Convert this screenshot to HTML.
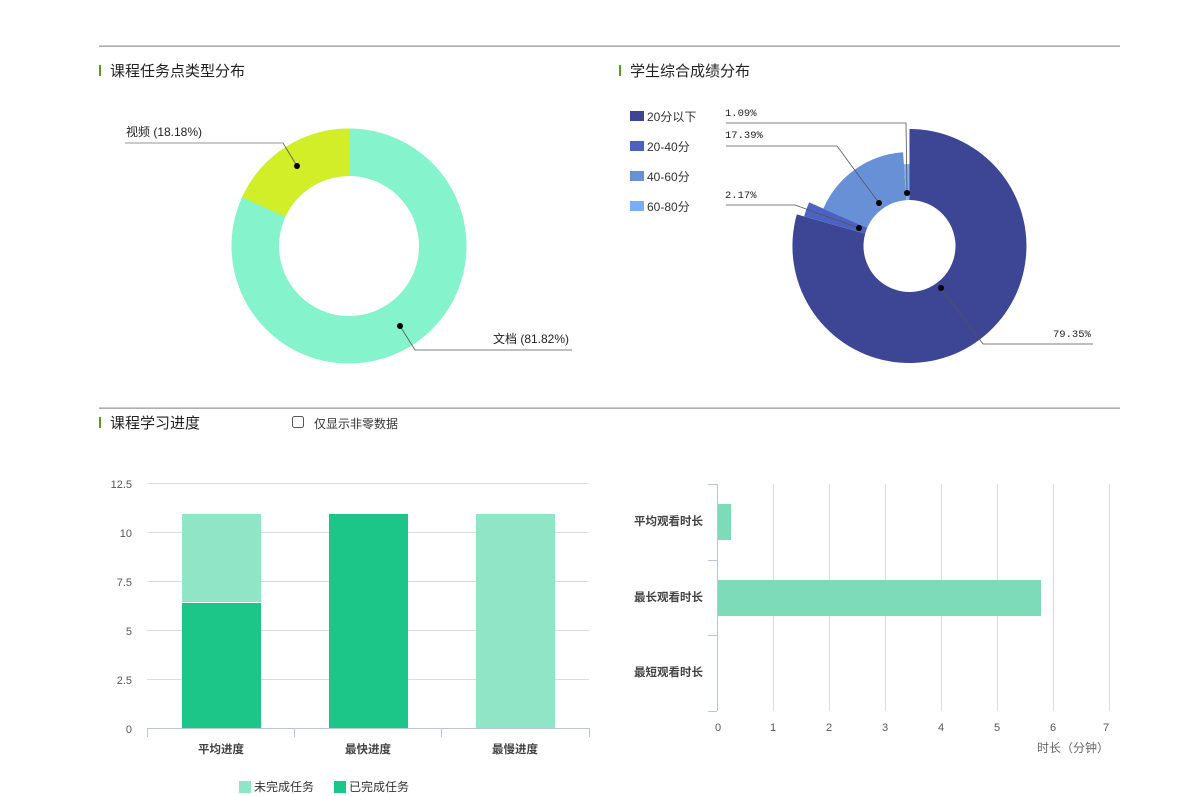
<!DOCTYPE html>
<html><head><meta charset="utf-8"><style>
html,body{margin:0;padding:0;background:#fff;width:1178px;height:796px;overflow:hidden}
svg{position:absolute;left:0;top:0}
text{font-family:"Liberation Sans","Noto Sans CJK SC",sans-serif}
text.mono{font-family:"Liberation Mono",monospace}
</style></head><body>
<svg width="1178" height="796" viewBox="0 0 1178 796" xmlns="http://www.w3.org/2000/svg">
<rect x="99" y="45.5" width="1021" height="1.3" fill="#9a9a9a"/>
<rect x="99" y="407.5" width="1021" height="1.3" fill="#9a9a9a"/>
<rect x="99" y="65" width="2" height="11" fill="#5a9a1e"/>
<rect x="619" y="65" width="2" height="11" fill="#5a9a1e"/>
<rect x="99" y="417" width="2" height="11" fill="#5a9a1e"/>
<text x="110" y="76" font-size="15" fill="#222">课程任务点类型分布</text>
<text x="630" y="76" font-size="15" fill="#222">学生综合成绩分布</text>
<text x="110" y="428" font-size="15" fill="#222">课程学习进度</text>
<rect x="292.5" y="416.5" width="11" height="11" rx="2" fill="#fff" stroke="#555" stroke-width="1"/>
<text x="314" y="428" font-size="12" fill="#333">仅显示非零数据</text>

<circle cx="349" cy="246" r="93.75" fill="none" stroke="#85f3cc" stroke-width="47.5"/>
<path d="M349 128.5 L349 176 A70 70 0 0 0 285.3 216.9 L242.1 197.2 A117.5 117.5 0 0 1 349 128.5 Z" fill="#d2ee28"/>
<polyline points="297,166 283,143 125,143" fill="none" stroke="#555" stroke-width="0.8"/>
<polyline points="125,143 283,143" fill="none" stroke="#aaa" stroke-width="1.2"/>
<circle cx="297" cy="166" r="3" fill="#000"/>
<polyline points="400,326 415,350 572,350" fill="none" stroke="#555" stroke-width="0.8"/>
<circle cx="400" cy="326" r="3" fill="#000"/>
<text x="126" y="136" font-size="12" fill="#222">视频 (18.18%)</text>
<text x="493" y="343" font-size="12" fill="#222">文档 (81.82%)</text>

<path d="M909.5 129 A117 117 0 1 1 796.8 214.4 L865.2 233.6 A46 46 0 1 0 909.5 200 Z" fill="#3d4595"/>
<path d="M804.1 216.4 A109.5 109.5 0 0 1 809.1 202.4 L867.3 227.7 A46 46 0 0 0 865.2 233.6 Z" fill="#4c62c2"/>
<path d="M823.3 208.6 A94 94 0 0 1 903.1 152.2 L906.3 200.1 A46 46 0 0 0 867.3 227.7 Z" fill="#6890d6"/>
<path d="M903.9 164.2 A82 82 0 0 1 909.5 164 L909.5 200 L906.3 200.1 Z" fill="#78aef8"/>
<g fill="none" stroke="#555" stroke-width="0.8">
<polyline points="907,193 906,123 726,123"/>
<polyline points="879,203 837,146 726,146"/>
<polyline points="859,228 795,205 726,205"/>
<polyline points="941,288 983,344 1093,344"/>
</g>
<circle cx="907" cy="193" r="3" fill="#000"/>
<circle cx="879" cy="203" r="3" fill="#000"/>
<circle cx="859" cy="228" r="3" fill="#000"/>
<circle cx="941" cy="288" r="3" fill="#000"/>
<text class="mono" x="725" y="116" font-size="10.5" fill="#222" style="font-family:'Liberation Mono',monospace">1.09%</text>
<text class="mono" x="725" y="138" font-size="10.5" fill="#222" style="font-family:'Liberation Mono',monospace">17.39%</text>
<text class="mono" x="725" y="198" font-size="10.5" fill="#222" style="font-family:'Liberation Mono',monospace">2.17%</text>
<text class="mono" x="1053" y="337" font-size="10.5" fill="#222" style="font-family:'Liberation Mono',monospace">79.35%</text>
<rect x="630" y="111" width="14" height="10" fill="#3d4595"/>
<rect x="630" y="141" width="14" height="10" fill="#4c62c2"/>
<rect x="630" y="171" width="14" height="10" fill="#6890d6"/>
<rect x="630" y="201" width="14" height="10" fill="#78aef8"/>
<g font-size="12" fill="#333">
<text x="647" y="121">20分以下</text>
<text x="647" y="151">20-40分</text>
<text x="647" y="181">40-60分</text>
<text x="647" y="211">60-80分</text>
</g>

<g stroke="#dcdcdc" stroke-width="1">
<line x1="147" y1="483.5" x2="589" y2="483.5"/>
<line x1="147" y1="532.5" x2="589" y2="532.5"/>
<line x1="147" y1="581.5" x2="589" y2="581.5"/>
<line x1="147" y1="630.5" x2="589" y2="630.5"/>
<line x1="147" y1="679.5" x2="589" y2="679.5"/>
</g>
<g font-size="11" fill="#555" text-anchor="end">
<text x="132" y="488">12.5</text>
<text x="132" y="537">10</text>
<text x="132" y="586">7.5</text>
<text x="132" y="635">5</text>
<text x="132" y="684">2.5</text>
<text x="132" y="733">0</text>
</g>
<rect x="182" y="514" width="79" height="88" fill="#90e5c6"/>
<rect x="182" y="603" width="79" height="125" fill="#1cc588"/>
<rect x="329" y="514" width="79" height="214" fill="#1cc588"/>
<rect x="476" y="514" width="79" height="214" fill="#90e5c6"/>
<g stroke="#b8c6da" stroke-width="1">
<line x1="147" y1="728.5" x2="589" y2="728.5"/>
<line x1="147.5" y1="728" x2="147.5" y2="737"/>
<line x1="294.5" y1="728" x2="294.5" y2="737"/>
<line x1="441.5" y1="728" x2="441.5" y2="737"/>
<line x1="589.5" y1="728" x2="589.5" y2="737"/>
</g>
<g font-size="11.5" fill="#444" text-anchor="middle" font-weight="bold">
<text x="221" y="753">平均进度</text>
<text x="368" y="753">最快进度</text>
<text x="515" y="753">最慢进度</text>
</g>
<rect x="239" y="781" width="12" height="12" fill="#90e5c6"/>
<text x="254" y="791" font-size="12" fill="#333">未完成任务</text>
<rect x="334" y="781" width="12" height="12" fill="#1cc588"/>
<text x="349" y="791" font-size="12" fill="#333">已完成任务</text>

<g stroke="#dcdcdc" stroke-width="1">
<line x1="773.5" y1="484" x2="773.5" y2="711"/>
<line x1="829.5" y1="484" x2="829.5" y2="711"/>
<line x1="885.5" y1="484" x2="885.5" y2="711"/>
<line x1="941.5" y1="484" x2="941.5" y2="711"/>
<line x1="997.5" y1="484" x2="997.5" y2="711"/>
<line x1="1053.5" y1="484" x2="1053.5" y2="711"/>
<line x1="1109.5" y1="484" x2="1109.5" y2="711"/>
</g>
<rect x="718" y="504" width="13" height="36" fill="#7edbb9"/>
<rect x="718" y="580" width="323" height="36" fill="#7edbb9"/>
<g stroke="#b8c6da" stroke-width="1">
<line x1="717.5" y1="484" x2="717.5" y2="711"/>
<line x1="708" y1="484.5" x2="717" y2="484.5"/>
<line x1="708" y1="560.5" x2="717" y2="560.5"/>
<line x1="708" y1="635.5" x2="717" y2="635.5"/>
<line x1="708" y1="711.5" x2="717" y2="711.5"/>
</g>
<g font-size="11.5" fill="#444" text-anchor="end" font-weight="bold">
<text x="703" y="525">平均观看时长</text>
<text x="703" y="601">最长观看时长</text>
<text x="703" y="676">最短观看时长</text>
</g>
<g font-size="11" fill="#555" text-anchor="middle">
<text x="718" y="731">0</text>
<text x="773" y="731">1</text>
<text x="829" y="731">2</text>
<text x="885" y="731">3</text>
<text x="941" y="731">4</text>
<text x="997" y="731">5</text>
<text x="1053" y="731">6</text>
<text x="1106" y="731">7</text>
</g>
<text x="1037" y="752" font-size="12" fill="#666">时长（分钟）</text>
</svg>
</body></html>
